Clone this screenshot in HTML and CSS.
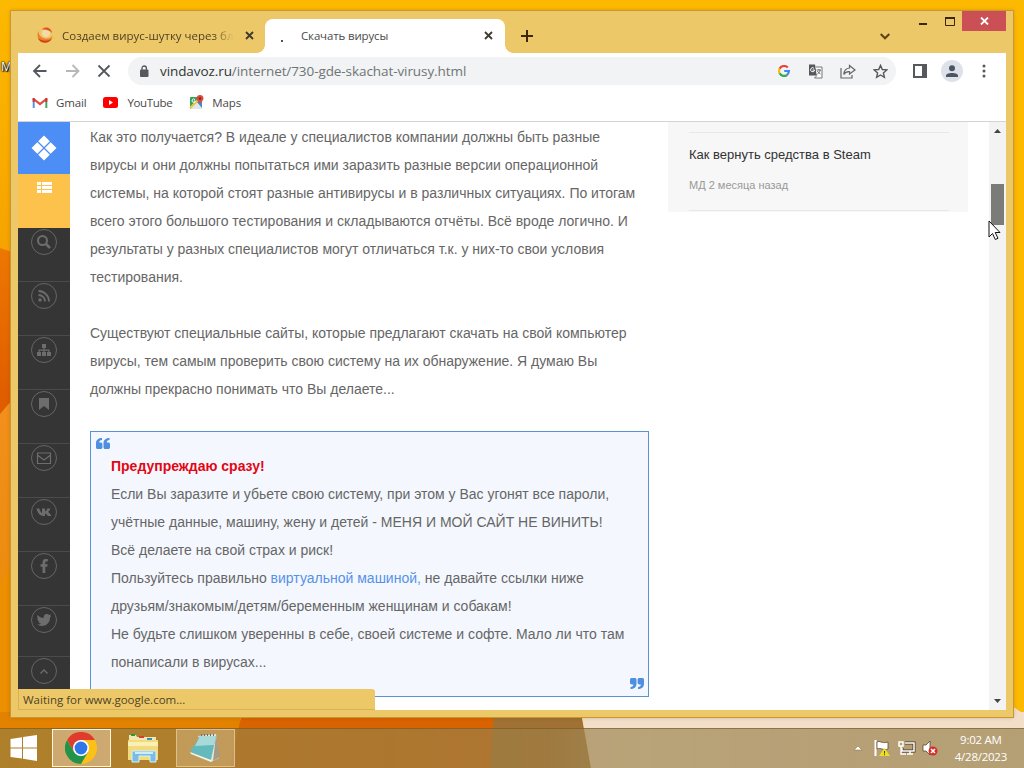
FILE: index.html
```html
<!DOCTYPE html>
<html lang="ru">
<head>
    <meta charset="UTF-8">
    <title>Скачать вирусы</title>
    <link rel="stylesheet" href="styles.css">
</head>
<body>
    <div class="desktop">
        <svg class="wallpaper" width="1024" height="768" viewBox="0 0 1024 768">
            <defs>
                <linearGradient id="top" x1="0" y1="0" x2="0" y2="1"><stop offset="0" stop-color="#fcb900"/><stop offset="1" stop-color="#f6a200"/></linearGradient>
                <linearGradient id="red" x1="0" y1="0" x2="0" y2="1"><stop offset="0" stop-color="#ed7800"/><stop offset=".3" stop-color="#e05c00"/></linearGradient>
                <linearGradient id="low" x1="0" y1="0" x2="0" y2="1"><stop offset="0" stop-color="#f2901c"/><stop offset="1" stop-color="#e68800"/></linearGradient>
            </defs>
            <rect width="1024" height="768" fill="#fcb900"/>
            <rect width="12" height="260" fill="url(#top)"/>
            <path d="M0 248L12 252V768H0Z" fill="url(#red)"/>
            <path d="M0 414L12 400V768H0Z" fill="url(#low)"/>
            <path d="M0 585L12 562V768H0Z" fill="#ec8f00"/>
            <rect y="712" width="240" height="56" fill="#e28200"/>
            <path d="M242 712H496V768H230Z" fill="#d96300"/>
            <path d="M494 712H581L591 768H490Z" fill="#9f7134"/>
            <path d="M581 712H1024V768H591Z" fill="#f2dec9"/>
            <path d="M1012 706L1024 714V720H1012Z" fill="#f2dec9"/>
        </svg>
        <span class="desktop-label">M</span>

        <div class="window">
            <div class="titlebar">
                <div class="tab">
                    <svg width="18" height="18" viewBox="0 0 18 18"><path d="M2.500 5C.5 9 1.500 14 5.500 16.300C10 18.500 15.500 16 16.500 10C14 13 9 13.500 5.500 11C3.500 9.500 2.500 7.500 2.500 5Z" fill="#ef8127"/><path d="M2 12C4 17.500 13 18.500 16 12.500C12 15.500 6 15.500 2 12Z" fill="#c9421b"/><circle cx="10" cy="7" r="4" fill="#f6d9a8"/><path d="M6 3.500C9 0 15.500 1.500 16 7C14 4.500 10 3 6 3.500Z" fill="#d95a1f"/></svg>
                    <span class="tab-title faded">Создаем вирус-шутку через бл</span>
                    <svg class="x" width="9" height="9" viewBox="0 0 9 9"><path d="M1 1L8 8M8 1L1 8"/></svg>
                </div>
                <div class="tab active">
                    <span class="spinner"></span>
                    <span class="tab-title">Скачать вирусы</span>
                    <svg class="x" width="9" height="9" viewBox="0 0 9 9"><path d="M1 1L8 8M8 1L1 8"/></svg>
                </div>
                <svg class="plus" width="12" height="12" viewBox="0 0 12 12"><path d="M6 0V12M0 6H12"/></svg>
                <svg class="chevron" width="10" height="7" viewBox="0 0 10 7"><path d="M.7 1L5 5.300L9.300 1"/></svg>
                <div class="controls">
                    <svg width="54" height="20" viewBox="0 0 54 20"><path d="M11 13H19" stroke="#3b2608" stroke-width="2"/><path d="M37.500 6.500H46.500V14.500H37.500Z" fill="none" stroke="#3b2608"/><path d="M37 7H47" stroke="#3b2608" stroke-width="2"/></svg>
                    <span class="close"><svg width="9" height="8" viewBox="0 0 9 8"><path d="M1 .5L8 7.500M8 .5L1 7.500" stroke="#fff" stroke-width="1.800"/></svg></span>
                </div>
            </div>

            <div class="browser">
                <div class="toolbar">
                    <svg class="nav" width="100" height="20" viewBox="0 0 100 20">
                        <path d="M14.500 10H2M8 4L2 10L8 16" stroke="#55585c"/>
                        <path d="M34 10H46.500M40.500 4L46.500 10L40.500 16" stroke="#b5b7b9"/>
                        <path d="M66.500 4.500L77.500 15.500M77.500 4.500L66.500 15.500" stroke="#55585c"/>
                    </svg>
                    <div class="omnibox">
                        <svg width="10" height="13" viewBox="0 0 10 13"><rect x="1" y="4.500" width="8.500" height="7.500" rx="1" fill="#55585c"/><path d="M3 5V3.200a2.200 2.200 0 0 1 4.400 0V5" fill="none" stroke="#55585c" stroke-width="1.300"/></svg>
                        <span class="url"><b>vindavoz.ru</b>/internet/730-gde-skachat-virusy.html</span>
                        <svg class="g" width="12" height="12" viewBox="0 0 12 12"><g fill="none" stroke-width="2.200"><path d="M9.800 2.600A5 5 0 0 0 1.600 3.800" stroke="#ea4335"/><path d="M1.600 3.800A5 5 0 0 0 1.600 8.300" stroke="#fbbc05"/><path d="M1.600 8.300A5 5 0 0 0 9.200 9.800" stroke="#34a853"/><path d="M9.200 9.800A5 5 0 0 0 10.900 6H6.200" stroke="#4285f4"/></g></svg>
                        <svg width="15" height="15" viewBox="0 0 15 15"><path d="M1 .5H7L9 11.500H1Z" fill="#55585c"/><path d="M7.500 3H14V14H6.500L9 11.500" fill="#fff" stroke="#777" stroke-width="1"/><path d="M6 4.300A2 2 0 1 0 6.600 6H4.500" stroke="#fff" fill="none"/><path d="M8.500 6H13M10.800 5V6M12.200 6C12 8 10.500 9.500 9.500 10M9.500 7C10 8.500 11.500 9.500 12.500 10" stroke="#666" fill="none"/></svg>
                        <svg width="16" height="15" viewBox="0 0 16 15"><path d="M1 4V14H12V11" fill="none" stroke="#666" stroke-width="1.200"/><path d="M9.500 1.500L15 6L9.500 10V7.600C7 7.400 5 8.300 3.800 10.500C4 6.500 6.500 4.300 9.500 4Z" fill="none" stroke="#666" stroke-width="1.200"/></svg>
                        <svg width="15" height="15" viewBox="0 0 15 15"><path d="M7.500 1.400L9.300 5.500L13.800 5.900L10.400 8.900L11.400 13.300L7.500 11L3.600 13.300L4.600 8.900L1.200 5.900L5.700 5.500Z" fill="none" stroke="#55585c" stroke-width="1.400"/></svg>
                    </div>
                    <svg class="panel-icon" width="14" height="14" viewBox="0 0 14 14"><path d="M1 1H13V13H1Z" fill="none" stroke="#55585c" stroke-width="2"/><path d="M9 0H14V14H9Z" fill="#55585c"/></svg>
                    <span class="avatar"><svg width="14" height="13" viewBox="0 0 14 13"><circle cx="7" cy="3.200" r="3" fill="#4c5564"/><path d="M1 12V10.500C1 7 13 7 13 10.500V12Z" fill="#4c5564"/></svg></span>
                    <svg width="4" height="14" viewBox="0 0 4 14" fill="#55585c"><circle cx="2" cy="2" r="1.500"/><circle cx="2" cy="7" r="1.500"/><circle cx="2" cy="12" r="1.500"/></svg>
                </div>

                <div class="bookmarks">
                    <svg width="16" height="12" viewBox="0 0 16 12"><path d="M1.700 11V1.500" stroke="#6590dc" stroke-width="2"/><path d="M14.300 11V1.500" stroke="#48a661" stroke-width="2"/><path d="M1 1.500L8 7L15 1.500" stroke="#dc4b40" stroke-width="2.200" fill="none"/><path d="M1.700 5V1M14.300 5V1" stroke="#cb3633" stroke-width="2"/></svg>
                    <span class="bm-gmail">Gmail</span>
                    <svg width="15" height="11" viewBox="0 0 15 11"><rect width="15" height="11" rx="2.500" fill="#f00"/><path d="M6 3L10 5.500L6 8Z" fill="#fff"/></svg>
                    <span class="bm-youtube">YouTube</span>
                    <svg width="15" height="15" viewBox="0 0 15 15"><rect x="1" y="2" width="12" height="12" rx="1" fill="#34a25a"/><path d="M1 14L8 7L13 13V14Z" fill="#e3e6e5"/><path d="M8 7L13 12V8L10 5Z" fill="#4285f4"/><path d="M1 13L12 2" stroke="#f4c344" stroke-width="2"/><path d="M6 4.600A1.700 1.700 0 1 0 6.400 6H4.800" fill="none" stroke="#fff"/><path d="M11 10C11 7 7.500 6 7.500 3.500a3.500 3.500 0 0 1 7 0C14.500 6 11 7 11 10Z" fill="#dd4a3e"/><circle cx="11" cy="3.500" r="1.200" fill="#7c2520"/></svg>
                    <span class="bm-maps">Maps</span>
                </div>

                <div class="page">
                    <nav class="side">
                        <a class="logo"><svg width="26" height="26" viewBox="0 0 26 26" fill="#fff"><path d="M13 .5L18.800 6.300L13 12.100L7.200 6.300ZM6.300 7.200L12.100 13L6.300 18.800L.5 13ZM19.700 7.200L25.500 13L19.700 18.800L13.900 13ZM13 13.900L18.800 19.700L13 25.500L7.200 19.700Z"/></svg></a>
                        <a class="list"><svg width="15" height="11" viewBox="0 0 15 11" fill="#fff"><path d="M0 0H4V3H0ZM5 0H15V3H5ZM0 4H4V7H0ZM5 4H15V7H5ZM0 8H4V11H0ZM5 8H15V11H5Z"/></svg></a>
                        <a><i><svg viewBox="0 0 16 16"><circle cx="6.500" cy="6.500" r="4.500" fill="none" stroke="#6d6d6d" stroke-width="2"/><path d="M10 10L14 14" stroke="#6d6d6d" stroke-width="2.500"/></svg></i></a>
                        <a><i><svg viewBox="0 0 16 16"><circle cx="4" cy="12" r="1.700" fill="#6d6d6d"/><path d="M2.500 7A6.500 6.500 0 0 1 9 13.500M2.500 3A10.500 10.500 0 0 1 13 13.500" stroke="#6d6d6d" stroke-width="1.800" fill="none"/></svg></i></a>
                        <a><i><svg viewBox="0 0 16 16" fill="#6d6d6d"><path d="M6 2H10V6H8.600V7.500H13.500V10H15V14H11V10H12.300V8.700H8.600V10H10V14H6V10H7.400V8.700H3.700V10H5V14H1V10H2.500V7.500H7.400V6H6Z"/></svg></i></a>
                        <a><i><svg viewBox="0 0 16 16"><path d="M3 2H13V14L8 10L3 14Z" fill="#6d6d6d"/></svg></i></a>
                        <a><i><svg viewBox="0 0 16 16"><path d="M1.500 3H14.500V13.500H1.500ZM2 5.500L8 10L14 5.500" fill="none" stroke="#6d6d6d" stroke-width="1.200"/></svg></i></a>
                        <a><i><svg viewBox="0 0 16 16"><path d="M.5 4.500H3.300C4 7 5 8.500 6 9V4.500H9V7.300C10 7 11 5.500 11.500 4.500H14.500C14 6 12.800 7.400 12 8C13 8.500 14.500 10 15.300 12H12C11.500 11 10 9.500 9 9.500V12H7.500C4 12 1.500 9 .5 4.500Z" fill="#6d6d6d"/></svg></i></a>
                        <a><i><svg viewBox="0 0 16 16"><path d="M6.500 15V8.700H4.500V6.200H6.500V4.500C6.500 2 8 1 9.500 1H11.800V3.500H10.300C9.500 3.500 9.300 4 9.300 4.700V6.200H11.700L11.300 8.700H9.300V15Z" fill="#6d6d6d"/></svg></i></a>
                        <a class="short"><i><svg viewBox="0 0 16 16"><path d="M1.500 3C3.200 5 5.300 6 7.700 6C7.300 3.500 9 2 10.800 2C11.800 2 12.500 2.400 13 3L15 2.300L14.200 4.200L15.300 4L14 5.500C14 11 10 14 6 14C4 14 2.300 13.500 1 12.600C2.700 12.700 4 12.200 5 11.400C3.700 11.300 2.700 10.500 2.300 9.400H3.500C2 8.900 1.200 7.700 1.200 6.200L2.400 6.500C1.100 5.500 .9 4.200 1.500 3Z" fill="#6d6d6d"/></svg></i></a>
                        <a><i><svg viewBox="0 0 16 16"><path d="M4.500 10.500L8 7L11.500 10.500" fill="none" stroke="#6d6d6d" stroke-width="1.300"/></svg></i></a>
                    </nav>

                    <main class="article">
                        <p>Как это получается? В идеале у специалистов компании должны быть разные<br>
                        вирусы и они должны попытаться ими заразить разные версии операционной<br>
                        системы, на которой стоят разные антивирусы и в различных ситуациях. По итогам<br>
                        всего этого большого тестирования и складываются отчёты. Всё вроде логично. И<br>
                        результаты у разных специалистов могут отличаться т.к. у них-то свои условия<br>
                        тестирования.</p>
                        <p>Существуют специальные сайты, которые предлагают скачать на свой компьютер<br>
                        вирусы, тем самым проверить свою систему на их обнаружение. Я думаю Вы<br>
                        должны прекрасно понимать что Вы делаете...</p>
                        <blockquote>
                            <svg class="quote open" width="14" height="11" viewBox="0 0 14 11"><path d="M6 0V2C4 2 3.200 3 3.200 4.500H4.500C5.800 4.500 6.400 5.200 6.400 6.200V9.200C6.400 10.400 5.700 11 4.600 11H1.800C.6 11 0 10.400 0 9.200V5C0 2 2.500 0 6 0ZM13.500 0V2C11.500 2 10.700 3 10.700 4.500H12C13.300 4.500 14 5.200 14 6.200V9.200C14 10.400 13.200 11 12.100 11H9.300C8.100 11 7.500 10.400 7.500 9.200V5C7.500 2 10 0 13.500 0Z"/></svg>
                            <strong>Предупреждаю сразу!</strong><br>
                            Если Вы заразите и убьете свою систему, при этом у Вас угонят все пароли,<br>
                            учётные данные, машину, жену и детей - МЕНЯ И МОЙ САЙТ НЕ ВИНИТЬ!<br>
                            Всё делаете на свой страх и риск!<br>
                            Пользуйтесь правильно <a>виртуальной машиной,</a> не давайте ссылки ниже<br>
                            друзьям/знакомым/детям/беременным женщинам и собакам!<br>
                            Не будьте слишком уверенны в себе, своей системе и софте. Мало ли что там<br>
                            понаписали в вирусах...
                            <svg class="quote end" width="14" height="11" viewBox="0 0 14 11"><path transform="rotate(180 7 5.500)" d="M6 0V2C4 2 3.200 3 3.200 4.500H4.500C5.800 4.500 6.400 5.200 6.400 6.200V9.200C6.400 10.400 5.700 11 4.600 11H1.800C.6 11 0 10.400 0 9.200V5C0 2 2.500 0 6 0ZM13.500 0V2C11.500 2 10.700 3 10.700 4.500H12C13.300 4.500 14 5.200 14 6.200V9.200C14 10.400 13.200 11 12.100 11H9.300C8.100 11 7.500 10.400 7.500 9.200V5C7.500 2 10 0 13.500 0Z"/></svg>
                        </blockquote>
                    </main>

                    <aside class="recent">
                        <div class="recent-item">
                            <div class="recent-title">Как вернуть средства в Steam</div>
                            <div class="recent-meta">МД 2 месяца назад</div>
                        </div>
                    </aside>

                    <div class="scrollbar">
                        <svg width="7" height="4" viewBox="0 0 7 4"><path d="M0 4L3.500 0L7 4Z" fill="#444"/></svg>
                        <div class="thumb"></div>
                        <svg class="down" width="7" height="4" viewBox="0 0 7 4"><path d="M0 0L3.500 4L7 0Z" fill="#444"/></svg>
                    </div>
                </div>
            </div>
            <div class="status">Waiting for www.google.com...</div>
        </div>

        <div class="taskbar">
            <span class="start"><svg width="28" height="28" viewBox="0 0 28 28" fill="#fff"><path d="M.5 5L12 3.300V13.500H.5ZM13 3.100L27 1V13.500H13ZM.5 14.500H12V24.500L.5 23ZM13 14.500H27V27L13 24.700Z"/></svg></span>
            <span class="task current"><svg width="32" height="32" viewBox="0 0 32 32"><circle cx="16" cy="16" r="16" fill="#fbc116"/><path d="M2.100 8A16 16 0 0 1 29.900 8H16L9 20Z" fill="#e03b2f"/><path d="M2.100 8L9 20L16 24L23 20L16 32A16 16 0 0 1 2.100 8Z" fill="#22934a"/><circle cx="16" cy="16" r="8" fill="#fff"/><circle cx="16" cy="16" r="6.400" fill="#2f76e8"/></svg></span>
            <span class="task plain"><svg width="32" height="30" viewBox="0 0 32 30"><path d="M2 2H9L10 4H29V8H2Z" fill="#eee9b3"/><path d="M4 1H8V3H4Z" fill="#249a45"/><path d="M12 3H17V5H12Z" fill="#d73f33"/><path d="M20 5H25V7H20Z" fill="#3e8bc0"/><path d="M1 7H31V27H1Z" fill="#f2db7c"/><path d="M1 9H31V13H1Z" fill="#faf0b4"/><path d="M5 18H29V29H23V23H12V29H5Z" fill="#79bde3" stroke="#d7f0ff"/><path d="M8 20H26" stroke="#cceefa" stroke-width="2"/></svg></span>
            <span class="task"><svg width="32" height="30" viewBox="0 0 32 30"><path d="M9 3L27 1L30 25L22 29Z" fill="#e9e9df"/><path d="M27 2L31 24L24 28Z" fill="#a69b84"/><path d="M11 3H27L22 27L1 19Z" fill="#63b9bc"/><path d="M11 3H27L25 12L6 13Z" fill="#a9dad7"/><path d="M1 19L22 27V29L2 21Z" fill="#e9f7f1"/><path d="M12 2H27" stroke="#5e6f77" stroke-width="2" stroke-dasharray="1 2"/></svg></span>
            <div class="tray">
                <svg width="86" height="18" viewBox="0 0 86 18">
                    <path d="M1 11L5 7L9 11Z" fill="#fff" stroke="#7c6b49" stroke-width=".5"/>
                    <path d="M22.500 1V17" stroke="#fff" stroke-width="2"/><path d="M24 3C27 1 28 5 35 3V10C30 12 28 8 24 10Z" fill="#fff" stroke="#4b3b22" stroke-width=".7"/><path d="M31.500 9L37 17H26Z" fill="#ecdf24"/><path d="M31.500 12V14.500M31.500 15.200V16.200" stroke="#443c10"/>
                    <path d="M52 4H61V12H49V9" fill="none" stroke="#493b24" stroke-width="3"/><path d="M52 4H61V12H49V9M54 15H60M57 12V15M46 3H50V7H46ZM48 7V15H53" fill="none" stroke="#fff" stroke-width="1.500"/>
                    <path d="M70 6H73L77 2V16L73 12H70Z" fill="#fff" stroke="#4b3b22" stroke-width=".7"/><circle cx="80" cy="12" r="4.500" fill="#d32e2c"/><path d="M78 10L82 14M82 10L78 14" stroke="#fff" stroke-width="1.500"/>
                </svg>
                <div class="clock"><span>9:02 AM</span><span>4/28/2023</span></div>
            </div>
        </div>

        <svg class="cursor" width="13" height="21" viewBox="0 0 13 21"><path d="M1 1V17L4.500 13.500L7.300 19.500L10 18.300L7.200 12.500H12Z" fill="#fff" stroke="#111"/></svg>
    </div>
</body>
</html>
```
FILE: styles.css
```css
* {
    box-sizing: border-box;
}

body {
    margin: 0;
    overflow: hidden;
    font-family: "Open Sans", "Noto Sans", sans-serif;
}

svg {
    display: block;
    flex: none;
}

.desktop {
    position: relative;
    width: 1024px;
    height: 768px;
    display: flex;
    flex-direction: column;
    justify-content: flex-end;
    overflow: hidden;
}

.wallpaper {
    position: absolute;
    left: 0;
    top: 0;
}

.desktop-label {
    position: absolute;
    left: 1px;
    top: 58px;
    font-size: 12px;
    color: white;
    text-shadow: 1px 1px 1px black, 0 0 2px black, 0 0 2px black;
}

/* browser window */
.window {
    position: absolute;
    left: 11px;
    top: 11px;
    width: 1002px;
    height: 706px;
    padding: 0 7px 7px;
    background: #edc868;
    box-shadow: 0 0 0 1px #c99632, 0 0 4px rgba(90, 50, 0, 0.35);
}

.titlebar {
    height: 42px;
    display: flex;
    align-items: flex-start;
    position: relative;
    font-size: 12px;
    color: #504326;
}

.tab {
    width: 247px;
    height: 34px;
    margin-top: 8px;
    padding: 0 11px 2px 18px;
    display: flex;
    align-items: center;
}

.tab-title {
    margin-left: 8px;
    flex: 1;
    white-space: nowrap;
    font-size: 11.5px;
}

.faded {
    margin-right: 11px;
    -webkit-mask-image: linear-gradient(90deg, #000 88%, transparent);
    mask-image: linear-gradient(90deg, #000 88%, transparent);
}

.x {
    fill: none;
    stroke: #3f3a30;
    stroke-width: 1.8;
}

.active {
    width: 240px;
    padding: 0 12px 2px 16px;
    background: white;
    border-radius: 8px 8px 0 0;
    position: relative;
    color: #4b4b4b;
}

.active .tab-title {
    letter-spacing: -0.15px;
}

.active::before,
.active::after {
    content: "";
    position: absolute;
    bottom: 0;
    width: 8px;
    height: 8px;
}

.active::before {
    left: -8px;
    background: radial-gradient(circle at 0 0, transparent 7.5px, white 8px);
}

.active::after {
    right: -8px;
    background: radial-gradient(circle at 100% 0, transparent 7.5px, white 8px);
}

.spinner {
    width: 2px;
    height: 2px;
    margin: 11px 10px 0 0;
    background: #555;
}

.plus {
    margin: 19px 0 0 16px;
    stroke: #3b2608;
    stroke-width: 2;
}

.chevron {
    margin: 22px 0 0 auto;
    fill: none;
    stroke: #5b4113;
    stroke-width: 2;
}

.controls {
    display: flex;
    width: 116px;
    justify-content: flex-end;
}

.close {
    width: 44px;
    height: 20px;
    background: #cb5056;
    display: flex;
    align-items: center;
    justify-content: center;
}

.controls > svg {
    margin-right: 0;
}

.browser {
    height: 657px;
    background: white;
    display: flex;
    flex-direction: column;
}

.toolbar {
    height: 37px;
    padding: 0 20px 1px 14px;
    display: flex;
    align-items: center;
}

.nav {
    fill: none;
    stroke-width: 1.8;
}

.omnibox {
    width: 768px;
    height: 28px;
    margin-left: -4px;
    padding: 0 8px 0 11px;
    border-radius: 14px;
    background: #f1f3f4;
    display: flex;
    align-items: center;
    gap: 17px;
    flex: none;
}

.url {
    margin-left: -6px;
    flex: 1;
    font-size: 13.5px;
    letter-spacing: -0.08px;
    color: #707376;
    white-space: nowrap;
}

.url b {
    font-weight: normal;
    color: #333;
}

.g {
    margin-right: 1px;
}

.panel-icon {
    margin-left: 17px;
}

.avatar {
    width: 22px;
    height: 22px;
    margin: 0 auto 0 14px;
    border-radius: 50%;
    background: #dde1e8;
    display: flex;
    align-items: center;
    justify-content: center;
}

.bookmarks {
    height: 32px;
    padding: 0 14px 6px;
    border-bottom: 1px solid #d4d4d4;
    display: flex;
    align-items: center;
    font-size: 11.5px;
    color: #484848;
}

.bookmarks span {
    margin: 0 17px 0 8px;
    letter-spacing: -0.15px;
}

.bookmarks .bm-youtube {
    margin-left: 9px;
    letter-spacing: -0.35px;
}

/* page content */
.page {
    height: 588px;
    display: flex;
    overflow: hidden;
    font-family: "Liberation Sans", Arial, sans-serif;
}

.side {
    width: 52px;
    background: #353535;
    flex: none;
}

.side a {
    height: 54px;
    padding-top: 1px;
    border-bottom: 1px solid #4b4b4b;
    display: flex;
    justify-content: center;
    align-items: flex-start;
}

.side .logo {
    height: 52px;
    padding: 0;
    border: 0;
    align-items: center;
    background: #4d8df6;
}

.side .list {
    padding-top: 8px;
    border: 0;
    background: #fdc24b;
}

.side .short {
    height: 51px;
}

.side i {
    width: 26px;
    height: 26px;
    border: 1px solid #666;
    border-radius: 50%;
    display: flex;
    align-items: center;
    justify-content: center;
}

.side i svg {
    width: 16px;
    height: 16px;
}

.article {
    width: 559px;
    margin-left: 20px;
    padding-top: 1px;
    flex: none;
    font-size: 14px;
    line-height: 28px;
    color: #666;
    white-space: nowrap;
}

.article p {
    margin: 0 0 28px;
}

blockquote {
    position: relative;
    margin: 0;
    padding: 20px;
    border: 1px solid #5b92d2;
    background: #f4f8fe;
}

blockquote strong {
    color: #e30613;
}

blockquote a {
    color: #5691e8;
}

.quote {
    position: absolute;
    fill: #4e8fe0;
}

.open {
    left: 5px;
    top: 6px;
}

.end {
    right: 4px;
    bottom: 7px;
}

.recent {
    width: 300px;
    height: 90px;
    margin-left: 19px;
    padding: 10px 19px 0 21px;
    background: #f7f7f7;
}

.recent-item {
    height: 79px;
    padding-top: 14px;
    border: solid #e8e8e8;
    border-width: 1px 0;
}

.recent-title {
    font-size: 13px;
    line-height: 16px;
    color: #333;
}

.recent-meta {
    margin-top: 15px;
    font-size: 11px;
    line-height: 14px;
    color: #999;
}

.scrollbar {
    width: 17px;
    margin-left: auto;
    padding: 7px 0 7px;
    background: #f3f3f3;
    display: flex;
    flex-direction: column;
    align-items: center;
}

.thumb {
    width: 13px;
    height: 41px;
    margin-top: 51px;
    background: #7b7b78;
}

.down {
    margin-top: auto;
}

.status {
    position: absolute;
    left: 7px;
    bottom: 7px;
    width: 357px;
    height: 21px;
    padding-left: 4px;
    background: #edc868;
    border: solid #d9b255;
    border-width: 0 0 1px 1px;
    border-radius: 0 3px 0 0;
    font-size: 11.5px;
    line-height: 21px;
    color: #514324;
}

/* taskbar */
.taskbar {
    position: relative;
    height: 40px;
    padding: 0 0 2px 10px;
    display: flex;
    align-items: center;
    border-top: 1px solid rgba(110, 80, 30, 0.55);
    background: linear-gradient(90deg, rgba(162, 127, 54, 0.8), rgba(159, 124, 66, 0.75) 53%, rgba(158, 134, 83, 0.68) 58%, rgba(158, 134, 83, 0.72));
}

.start {
    width: 42px;
}

.task {
    width: 59px;
    height: 38px;
    margin-right: 3px;
    border: 1px solid rgba(255, 240, 200, 0.45);
    background: rgba(230, 205, 170, 0.35);
    display: flex;
    align-items: center;
    justify-content: center;
}

.task svg {
    margin-left: -2px;
}

.current {
    border: 1px solid #fff5df;
    background: rgba(235, 210, 180, 0.5);
}

.plain {
    border-color: transparent;
    background: none;
}

.tray {
    margin-left: auto;
    padding-right: 17px;
    display: flex;
    align-items: center;
    gap: 16px;
    color: white;
}

.clock {
    display: flex;
    flex-direction: column;
    align-items: center;
    font-size: 11.5px;
    line-height: 17px;
    letter-spacing: -0.25px;
}

.cursor {
    position: absolute;
    left: 988px;
    top: 220px;
}
```
